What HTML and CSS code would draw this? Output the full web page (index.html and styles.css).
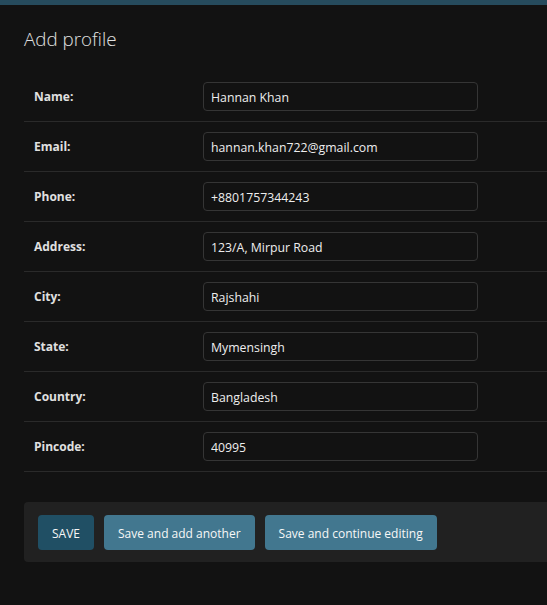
FILE: index.html
```html
<!DOCTYPE html>
<html lang="en">
<head>
<meta charset="utf-8">
<title>Add profile</title>
<link rel="stylesheet" href="styles.css">
</head>
<body>
<div class="topbar"></div>
<main class="content">
  <h1 class="title">Add profile</h1>
  <form class="form">
    <div class="row"><label class="label">Name:</label><input class="field" type="text" value="Hannan Khan"></div>
    <div class="row"><label class="label">Email:</label><input class="field" type="text" value="hannan.khan722@gmail.com"></div>
    <div class="row"><label class="label">Phone:</label><input class="field" type="text" value="+8801757344243"></div>
    <div class="row"><label class="label">Address:</label><input class="field" type="text" value="123/A, Mirpur Road"></div>
    <div class="row"><label class="label">City:</label><input class="field" type="text" value="Rajshahi"></div>
    <div class="row"><label class="label">State:</label><input class="field" type="text" value="Mymensingh"></div>
    <div class="row"><label class="label">Country:</label><input class="field" type="text" value="Bangladesh"></div>
    <div class="row"><label class="label">Pincode:</label><input class="field" type="text" value="40995"></div>
    <div class="submit-row">
      <button type="button" class="btn btn-default">SAVE</button>
      <button type="button" class="btn">Save and add another</button>
      <button type="button" class="btn">Save and continue editing</button>
    </div>
  </form>
</main>
</body>
</html>
```
FILE: styles.css
```css
html, body {
  margin: 0;
  padding: 0;
  background: #121212;
  color: #eeeeee;
  font-family: "Open Sans", "Noto Sans", sans-serif;
  font-size: 12.3px;
}
.topbar {
  height: 5px;
  background: #264b5d;
}
.content {
  padding: 22px 0 0 24px;
}
.title {
  margin: 0 0 21px;
  font-size: 18.8px;
  line-height: 24px;
  font-weight: 300;
  color: #e0e0e0;
}
.form {
  margin: 0;
}
.row {
  display: flex;
  align-items: center;
  padding: 10px;
  border-bottom: 1px solid #2a2a2a;
}
.label {
  width: 169px;
  flex: none;
  font-weight: 700;
  color: #e0e0e0;
  font-size: 12px;
}
.field {
  box-sizing: border-box;
  width: 275px;
  height: 29px;
  padding: 1px 7px 0;
  background: #121212;
  border: 1px solid #353535;
  border-radius: 4px;
  color: #eeeeee;
  font-family: inherit;
  font-size: 12.3px;
  outline: none;
}
.submit-row {
  display: flex;
  gap: 10px;
  margin-top: 30px;
  padding: 13px 14px 12px;
  background: #212121;
  border-radius: 4px 0 0 4px;
}
.btn {
  height: 35px;
  padding: 1px 14px 0;
  border: none;
  border-radius: 4px;
  background: #42778f;
  color: #f7f7f7;
  font-family: inherit;
  font-size: 12px;
  cursor: pointer;
}
.btn-default {
  background: #204f64;
}
```
